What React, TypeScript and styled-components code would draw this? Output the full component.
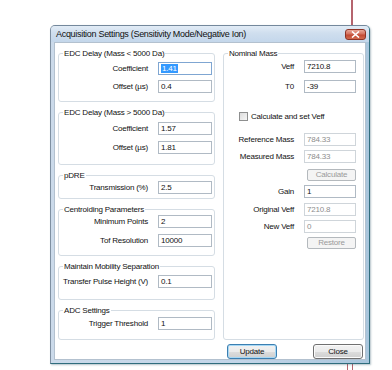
import React from 'react';
import styled, { createGlobalStyle } from 'styled-components';

const GlobalStyle = createGlobalStyle`
  html, body {
    margin: 0;
    padding: 0;
  }
  body {
    width: 392px;
    height: 370px;
    overflow: hidden;
    font-family: 'Liberation Sans', Arial, sans-serif;
    background:
      linear-gradient(#b5646e, #b5646e) 351px 0 / 2px 26px no-repeat,
      linear-gradient(#b5646e, #b5646e) 347px 362px / 1px 8px no-repeat,
      linear-gradient(#b5646e, #b5646e) 352px 362px / 1px 8px no-repeat,
      #fff;
  }
`;

const Page = styled.div`
  padding: 25px 0 0 50px;
`;

const Window = styled.div`
  box-sizing: border-box;
  width: 320px;
  height: 339px;
  display: flex;
  flex-direction: column;
  border: 1px solid;
  border-color: #74889c #2f6d7d #2f6d7d #7f90a2;
  border-radius: 5px 5px 0 0;
  background: linear-gradient(90deg, #cbdaea, #c2d5e8 60%, #a9c6dd);
  box-shadow: 1px 1px 2px rgba(40, 80, 100, 0.35);
`;

const TitleBar = styled.div`
  height: 16px;
  display: flex;
  align-items: center;
  padding: 0 3px 0 5px;
  border-radius: 4px 4px 0 0;
  background: linear-gradient(#e2ecf6, #cfdeee 45%, #c4d7eb);
`;

const Title = styled.div`
  flex: 1;
  font-size: 9px;
  letter-spacing: -0.3px;
  color: #111;
  white-space: nowrap;
`;

const CloseX = styled.div`
  box-sizing: border-box;
  width: 21px;
  height: 11px;
  display: flex;
  align-items: center;
  justify-content: center;
  border: 1px solid #8d3326;
  border-radius: 3px;
  background: linear-gradient(#e9a797, #d3705d 45%, #c24a33 55%, #d06a4e);
`;

const Client = styled.div`
  box-sizing: border-box;
  flex: 1;
  margin: 0 3px 3px 3px;
  padding: 10px 1px 0 3px;
  display: flex;
  gap: 8px;
  border: 1px solid #b3c1cf;
  background: #fff;
  font-size: 8px;
  letter-spacing: -0.2px;
  color: #111;
`;

const Column = styled.div<{ $w: number }>`
  width: ${p => p.$w}px;
  display: flex;
  flex-direction: column;
  gap: 10px;
`;

const Group = styled.div<{ $h: number; $pr: number }>`
  box-sizing: border-box;
  position: relative;
  height: ${p => p.$h}px;
  padding-right: ${p => p.$pr}px;
  border: 1px solid #d5dde4;
  border-radius: 3px;
`;

const Legend = styled.div`
  position: absolute;
  top: -6px;
  left: 4px;
  padding: 0 1px;
  background: #fff;
  line-height: 11px;
  white-space: nowrap;
`;

const Row = styled.div<{ $mt: number; $h?: number }>`
  display: flex;
  align-items: center;
  height: ${p => p.$h ?? 13}px;
  margin-top: ${p => p.$mt}px;
`;

const Label = styled.span`
  flex: 1;
  text-align: right;
  white-space: nowrap;
`;

const TextBox = styled.div<{ $w: number; $disabled?: boolean; $focused?: boolean }>`
  box-sizing: border-box;
  flex: none;
  width: ${p => p.$w}px;
  height: 13px;
  margin-left: 10px;
  padding: 0 2px;
  border: 1px solid ${p => (p.$focused ? '#7fa6d2' : p.$disabled ? '#cfd5da' : '#b0bac4')};
  background: #fff;
  color: ${p => (p.$disabled ? '#8e8e8e' : '#111')};
  line-height: 11px;
  white-space: nowrap;
`;

const Selected = styled.span`
  background: #3399ff;
  color: #fff;
  padding: 0 1px;
`;

const CheckRow = styled.div`
  display: flex;
  align-items: center;
  height: 13px;
  margin-top: 17px;
  padding-left: 15px;
  gap: 3px;
`;

const CheckBox = styled.div`
  box-sizing: border-box;
  width: 9px;
  height: 9px;
  border: 1px solid #8e8f8f;
  background: linear-gradient(135deg, #dcdcdc, #f6f6f6);
`;

const SmallButton = styled.div`
  box-sizing: border-box;
  width: 49px;
  height: 12px;
  margin-left: auto;
  border: 1px solid #b4b9bd;
  border-radius: 2px;
  background: #f4f4f4;
  color: #9a9a9a;
  text-align: center;
  line-height: 10px;
`;

const ButtonRow = styled.div`
  display: flex;
  justify-content: space-between;
  margin-top: -6px;
  padding: 0 1px 0 4px;
`;

const PushButton = styled.div<{ $default?: boolean }>`
  box-sizing: border-box;
  width: 50px;
  height: 15px;
  border: 1px solid ${p => (p.$default ? '#3c7fb1' : '#707070')};
  border-radius: 3px;
  background: linear-gradient(#f2f2f2, #ebebeb 50%, #dddddd 51%, #cfcfcf);
  box-shadow: ${p => (p.$default ? 'inset 0 0 0 1px #a7d8f5' : 'inset 0 0 0 1px #fbfbfb')};
  color: #111;
  text-align: center;
  line-height: 13px;
`;

type Field = {
  label: string;
  value: string;
  mt: number;
  disabled?: boolean;
  focused?: boolean;
};

type Section = { title: string; h: number; fields: Field[] };

const leftSections: Section[] = [
  {
    title: 'EDC Delay (Mass < 5000 Da)',
    h: 49,
    fields: [
      { label: 'Coefficient', value: '1.41', mt: 8, focused: true },
      { label: 'Offset (µs)', value: '0.4', mt: 5 },
    ],
  },
  {
    title: 'EDC Delay (Mass > 5000 Da)',
    h: 53,
    fields: [
      { label: 'Coefficient', value: '1.57', mt: 9 },
      { label: 'Offset (µs)', value: '1.81', mt: 6 },
    ],
  },
  {
    title: 'pDRE',
    h: 24,
    fields: [{ label: 'Transmission (%)', value: '2.5', mt: 5 }],
  },
  {
    title: 'Centroiding Parameters',
    h: 47,
    fields: [
      { label: 'Minimum Points', value: '2', mt: 5 },
      { label: 'Tof Resolution', value: '10000', mt: 6 },
    ],
  },
  {
    title: 'Maintain Mobility Separation',
    h: 34,
    fields: [{ label: 'Transfer Pulse Height (V)', value: '0.1', mt: 8 }],
  },
  {
    title: 'ADC Settings',
    h: 30,
    fields: [{ label: 'Trigger Threshold', value: '1', mt: 6 }],
  },
];

const FieldRow = ({ f, w }: { f: Field; w: number }) => (
  <Row $mt={f.mt}>
    <Label>{f.label}</Label>
    <TextBox $w={w} $disabled={f.disabled} $focused={f.focused}>
      {f.focused ? <Selected>{f.value}</Selected> : f.value}
    </TextBox>
  </Row>
);

const CloseIcon = () => (
  <svg width="9" height="7" viewBox="0 0 9 7">
    <path d="M1 0.5 L8 6.5 M8 0.5 L1 6.5" stroke="#fff" strokeWidth="1.6" />
  </svg>
);

export default function App() {
  return (
    <Page>
      <GlobalStyle />
      <Window>
        <TitleBar>
          <Title>Acquisition Settings (Sensitivity Mode/Negative Ion)</Title>
          <CloseX>
            <CloseIcon />
          </CloseX>
        </TitleBar>
        <Client>
          <Column $w={157}>
            {leftSections.map(s => (
              <Group key={s.title} $h={s.h} $pr={2}>
                <Legend>{s.title}</Legend>
                {s.fields.map(f => (
                  <FieldRow key={f.label} f={f} w={54} />
                ))}
              </Group>
            ))}
          </Column>
          <Column $w={141}>
            <Group $h={287} $pr={7}>
              <Legend>Nominal Mass</Legend>
              <FieldRow f={{ label: 'Veff', value: '7210.8', mt: 6 }} w={52} />
              <FieldRow f={{ label: 'T0', value: '-39', mt: 7 }} w={52} />
              <CheckRow>
                <CheckBox />
                <span>Calculate and set Veff</span>
              </CheckRow>
              <FieldRow f={{ label: 'Reference Mass', value: '784.33', mt: 10, disabled: true }} w={52} />
              <FieldRow f={{ label: 'Measured Mass', value: '784.33', mt: 4, disabled: true }} w={52} />
              <Row $mt={6} $h={12}>
                <SmallButton>Calculate</SmallButton>
              </Row>
              <FieldRow f={{ label: 'Gain', value: '1', mt: 4 }} w={52} />
              <FieldRow f={{ label: 'Original Veff', value: '7210.8', mt: 5, disabled: true }} w={52} />
              <FieldRow f={{ label: 'New Veff', value: '0', mt: 4, disabled: true }} w={52} />
              <Row $mt={4} $h={12}>
                <SmallButton>Restore</SmallButton>
              </Row>
            </Group>
            <ButtonRow>
              <PushButton $default>Update</PushButton>
              <PushButton>Close</PushButton>
            </ButtonRow>
          </Column>
        </Client>
      </Window>
    </Page>
  );
}
